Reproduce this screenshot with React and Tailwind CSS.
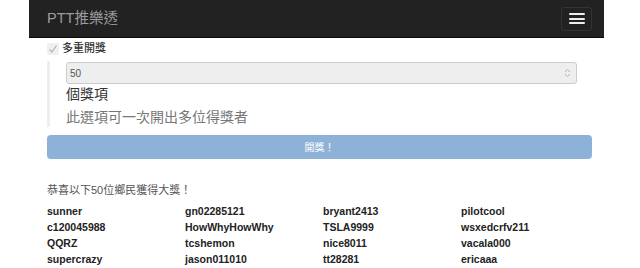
import React from "react";

const winners = [
  "sunner", "gn02285121", "bryant2413", "pilotcool",
  "c120045988", "HowWhyHowWhy", "TSLA9999", "wsxedcrfv211",
  "QQRZ", "tcshemon", "nice8011", "vacala000",
  "supercrazy", "jason011010", "tt28281", "ericaaa",
];

const cjk = { fontFamily: '"Liberation Sans", "Noto Sans CJK TC", sans-serif' };

export default function App() {
  return (
    <div className="w-[640px] h-[268px] bg-white overflow-hidden" style={cjk}>
      <div className="ml-[29px] w-[575px]">
        {/* navbar */}
        <div className="h-[38px] bg-[#222222] border-b border-[#080808] flex items-center justify-between pl-[18px] pr-[12px]">
          <span className="text-[14.5px] text-[#9d9d9d]">PTT推樂透</span>
          <button className="w-[31px] h-[24px] border border-[#333] rounded-[3px] flex flex-col items-center justify-center gap-[2.5px]">
            <span className="block w-[16px] h-[2px] bg-[#eee] rounded-[1px]" />
            <span className="block w-[16px] h-[2px] bg-[#eee] rounded-[1px]" />
            <span className="block w-[16px] h-[2px] bg-[#eee] rounded-[1px]" />
          </button>
        </div>

        <div className="pl-[18px] pr-[12px]">
          {/* checkbox */}
          <div className="mt-[2px] h-[17px] flex items-center gap-[3px]">
            <span className="w-[12px] h-[12px] rounded-[2px] bg-[#f0f0f0] flex items-center justify-center">
              <svg width="10" height="10" viewBox="0 0 10 10">
                <path d="M1.5 5.5 L4 8 L8.5 1.5" fill="none" stroke="#b5b5b5" strokeWidth="1.3" />
              </svg>
            </span>
            <span className="text-[11px] font-medium text-[#333]">多重開獎</span>
          </div>

          {/* options block */}
          <div className="mt-[4px] border-l-[3px] border-[#eeeeee] pl-[16px]">
            <div className="pt-[1px] mr-[15px]">
              <div className="h-[22px] bg-[#eeeeee] border border-[#cccccc] rounded-[3px] flex items-center justify-between pl-[3px] pr-[5px]">
                <span className="text-[10px] text-[#555]">50</span>
                <svg width="7" height="10" viewBox="0 0 7 10">
                  <path d="M1 4 L3.5 1.5 L6 4 M1 6 L3.5 8.5 L6 6" fill="none" stroke="#aaa" strokeWidth="0.9" />
                </svg>
              </div>
            </div>
            <div className="text-[14px] leading-[20px] text-[#333]">個獎項</div>
            <div className="mt-[3px] text-[14px] leading-[20px] text-[#777]">此選項可一次開出多位得獎者</div>
          </div>

          {/* draw button */}
          <button className="mt-[8px] w-full h-[24px] rounded-[4px] bg-[#8eb1d8] text-white text-[10px] flex items-center justify-center">
            開獎！
          </button>

          <div className="mt-[23px] text-[11px] leading-[16px] text-[#555]">恭喜以下50位鄉民獲得大獎！</div>

          <div className="mt-[5px] grid grid-cols-4 w-[552px]">
            {winners.map((w) => (
              <div key={w} className="text-[10.5px] leading-[16px] font-bold text-[#222]">
                {w}
              </div>
            ))}
          </div>
        </div>
      </div>
    </div>
  );
}
